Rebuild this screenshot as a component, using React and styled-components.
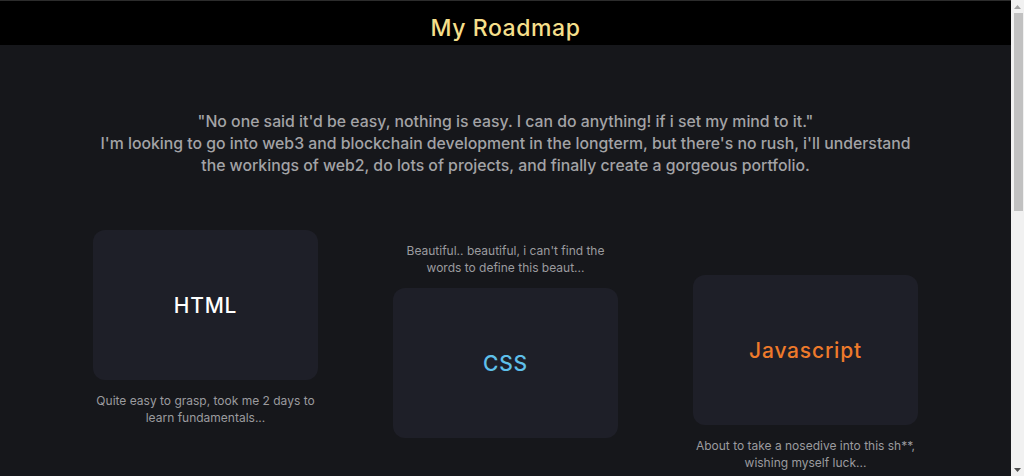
import React from "react";
import styled, { createGlobalStyle } from "styled-components";

const GlobalStyle = createGlobalStyle`
  html, body {
    margin: 0;
    padding: 0;
    background: #16171b;
    font-family: Inter, "Open Sans", "Liberation Sans", sans-serif;
  }
  body {
    border-top: 1px solid #2c2c2c;
  }
`;

const Page = styled.div`
  padding-right: 13px;
`;

const Header = styled.header`
  height: 44px;
  box-sizing: border-box;
  padding-top: 9px;
  background: #000;
  display: flex;
  align-items: center;
  justify-content: center;
`;

const Title = styled.h1`
  margin: 0;
  font-size: 23px;
  font-weight: 500;
  color: #f5df8b;
  letter-spacing: 0.6px;
`;

const Main = styled.main`
  min-height: 1020px;
  padding-top: 66px;
  display: flex;
  flex-direction: column;
  align-items: center;
`;

const Intro = styled.p`
  margin: 0;
  text-align: center;
  font-size: 15.8px;
  line-height: 22px;
  font-weight: 500;
  color: #a3a3a6;
`;

const Roadmap = styled.section`
  margin-top: 53px;
  display: grid;
  grid-template-columns: repeat(3, 225px);
  column-gap: 75px;
  align-items: start;
`;

const Step = styled.div`
  margin-top: ${(p) => p.$offset}px;
  display: flex;
  flex-direction: column;
  align-items: center;
  gap: 12px;
`;

const Card = styled.div`
  width: 225px;
  height: 150px;
  border-radius: 12px;
  background: #1e1f28;
  display: flex;
  align-items: center;
  justify-content: center;
  font-size: 21px;
  font-weight: 500;
  letter-spacing: 0.8px;
  color: ${(p) => p.$color};
`;

const Caption = styled.p`
  margin: 0;
  text-align: center;
  font-size: 12px;
  line-height: 17px;
  color: #9b9b9f;
`;

/* browser scrollbar as seen in the screenshot */
const Scrollbar = styled.div`
  position: fixed;
  top: 0;
  right: 0;
  bottom: 0;
  width: 13px;
  background: #f1f1f1;
  display: flex;
  flex-direction: column;
  align-items: center;
`;

const Arrow = styled.div`
  height: 13px;
  display: flex;
  align-items: center;
  justify-content: center;
  margin-top: ${(p) => (p.$down ? "auto" : "0")};
`;

const Thumb = styled.div`
  width: 9px;
  height: 198px;
  margin-left: 1px;
  background: #c1c1c1;
`;

const steps = [
  {
    name: "HTML",
    color: "#ffffff",
    offset: 0,
    note: ["Quite easy to grasp, took me 2 days to", "learn fundamentals..."],
    above: false,
  },
  {
    name: "CSS",
    color: "#5ebfea",
    offset: 12,
    note: ["Beautiful.. beautiful, i can't find the", "words to define this beaut..."],
    above: true,
  },
  {
    name: "Javascript",
    color: "#ee7a2b",
    offset: 45,
    note: ["About to take a nosedive into this sh**,", "wishing myself luck..."],
    above: false,
  },
];

const App = () => {
  return (
    <Page>
      <GlobalStyle />
      <Header>
        <Title>My Roadmap</Title>
      </Header>
      <Main>
        <Intro>
          "No one said it'd be easy, nothing is easy. I can do anything! if i set my mind to it."
          <br />
          I'm looking to go into web3 and blockchain development in the longterm, but there's no rush, i'll understand
          <br />
          the workings of web2, do lots of projects, and finally create a gorgeous portfolio.
        </Intro>
        <Roadmap>
          {steps.map((s) => {
            const caption = (
              <Caption>
                {s.note[0]}
                <br />
                {s.note[1]}
              </Caption>
            );
            return (
              <Step key={s.name} $offset={s.offset}>
                {s.above && caption}
                <Card $color={s.color}>{s.name}</Card>
                {!s.above && caption}
              </Step>
            );
          })}
        </Roadmap>
      </Main>
      <Scrollbar>
        <Arrow>
          <svg width="7" height="4" viewBox="0 0 7 4">
            <path d="M0 4 L3.5 0 L7 4 Z" fill="#a3a3a3" />
          </svg>
        </Arrow>
        <Thumb />
        <Arrow $down>
          <svg width="7" height="4" viewBox="0 0 7 4">
            <path d="M0 0 L3.5 4 L7 0 Z" fill="#505050" />
          </svg>
        </Arrow>
      </Scrollbar>
    </Page>
  );
};

export default App;
